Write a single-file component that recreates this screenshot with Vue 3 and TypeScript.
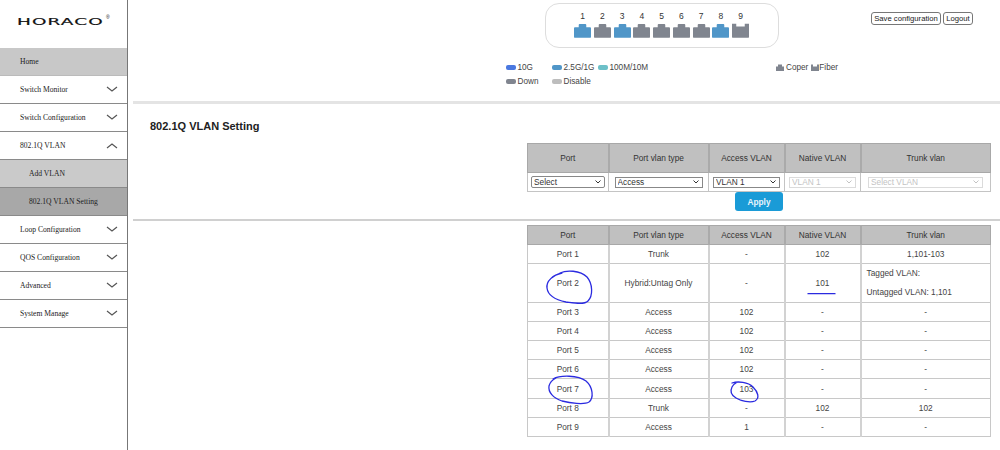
<script setup lang="ts">
interface MenuItem { label: string; chevron?: 'up' | 'down'; kind?: string }
const menu: MenuItem[] = [
  { label: 'Home', kind: 'home' },
  { label: 'Switch Monitor', chevron: 'down' },
  { label: 'Switch Configuration', chevron: 'down' },
  { label: '802.1Q VLAN', chevron: 'up' },
  { label: 'Add VLAN', kind: 'sub' },
  { label: '802.1Q VLAN Setting', kind: 'sub active' },
  { label: 'Loop Configuration', chevron: 'down' },
  { label: 'QOS Configuration', chevron: 'down' },
  { label: 'Advanced', chevron: 'down' },
  { label: 'System Manage', chevron: 'down' },
]
const ports = [
  { n: 1, up: true }, { n: 2, up: false }, { n: 3, up: true }, { n: 4, up: false }, { n: 5, up: false },
  { n: 6, up: false }, { n: 7, up: false }, { n: 8, up: true },
]
const heads = ['Port', 'Port vlan type', 'Access VLAN', 'Native VLAN', 'Trunk vlan']
const rows = [
  ['Port 1', 'Trunk', '-', '102', '1,101-103'],
  ['Port 2', 'Hybrid:Untag Only', '-', '101', ''],
  ['Port 3', 'Access', '102', '-', '-'],
  ['Port 4', 'Access', '102', '-', '-'],
  ['Port 5', 'Access', '102', '-', '-'],
  ['Port 6', 'Access', '102', '-', '-'],
  ['Port 7', 'Access', '103', '-', '-'],
  ['Port 8', 'Trunk', '-', '102', '102'],
  ['Port 9', 'Access', '1', '-', '-'],
]
const selects = [
  { cls: 's-port', val: 'Select', off: false },
  { cls: 's-type', val: 'Access', off: false },
  { cls: 's-acc', val: 'VLAN 1', off: false },
  { cls: 's-nat', val: 'VLAN 1', off: true },
  { cls: 's-trunk', val: 'Select VLAN', off: true },
]
</script>

<template>
  <div class="page">
    <aside class="side">
      <div class="logo"><span class="logo-text">HORACO</span><sup class="reg">®</sup></div>
      <nav>
        <div v-for="m in menu" :key="m.label" class="item" :class="m.kind">
          <span>{{ m.label }}</span>
          <svg v-if="m.chevron" class="chev" width="12" height="7" viewBox="0 0 12 7">
            <path :d="m.chevron === 'down' ? 'M1 1l5 4 5-4' : 'M1 6l5-4 5 4'" fill="none" stroke="#555" stroke-width="1.2" />
          </svg>
        </div>
      </nav>
    </aside>

    <main class="main">
      <header class="top">
        <div class="panel-wrap">
          <div class="panel">
            <div v-for="p in ports" :key="p.n" class="port">
              <span>{{ p.n }}</span>
              <svg width="17" height="15" viewBox="0 0 18 16" preserveAspectRatio="none">
                <path d="M0 15V5.500q0-1 1-1h4V2q0-1 1-1h6q1 0 1 1v2.500h4q1 0 1 1V15q0 .6-.6.6H.6Q0 15.600 0 15z" :fill="p.up ? '#5096c8' : '#80858f'" />
              </svg>
            </div>
            <div class="port">
              <span>9</span>
              <svg width="17" height="15" viewBox="0 0 18 16" preserveAspectRatio="none">
                <path d="M0 .8h4.500v3h9v-3H18V15q0 .6-.6.6H.6Q0 15.600 0 15z" fill="#80858f" />
              </svg>
            </div>
          </div>
          <div class="legend">
            <div class="leg-col">
              <div class="leg-row">
                <span class="leg l1"><i class="dot d-10g"></i>10G</span>
                <span class="leg l2"><i class="dot d-25g"></i>2.5G/1G</span>
                <span class="leg"><i class="dot d-100m"></i>100M/10M</span>
              </div>
              <div class="leg-row">
                <span class="leg l1"><i class="dot d-down"></i>Down</span>
                <span class="leg l2"><i class="dot d-dis"></i>Disable</span>
              </div>
            </div>
            <div class="leg-media">
              <span class="leg"><svg width="8" height="7" viewBox="0 0 8 7"><path d="M0 7V2.500h2V.500h4v2h2V7z" fill="#80858f" /></svg>Coper</span>
              <span class="leg tight"><svg width="8" height="7" viewBox="0 0 8 7"><path d="M0 .500h2v2h4v-2h2V7H0z" fill="#80858f" /></svg>Fiber</span>
            </div>
          </div>
        </div>
        <div class="actions">
          <button class="btn b-save" type="button">Save configuration</button>
          <button class="btn b-out" type="button">Logout</button>
        </div>
      </header>

      <div class="rule thick"></div>
      <h1 class="title">802.1Q VLAN Setting</h1>

      <div class="form-block">
        <table class="tbl form">
          <colgroup>
            <col class="c1" /><col class="c2" /><col class="c3" /><col class="c4" /><col class="c5" />
          </colgroup>
          <thead><tr><th v-for="h in heads" :key="h">{{ h }}</th></tr></thead>
          <tbody>
            <tr>
              <td v-for="s in selects" :key="s.cls">
                <select class="sel" :class="s.cls" :disabled="s.off"><option>{{ s.val }}</option></select>
              </td>
            </tr>
          </tbody>
        </table>
        <button class="apply" type="button">Apply</button>
      </div>

      <div class="rule thin"></div>

      <table class="tbl list">
        <colgroup>
          <col class="c1" /><col class="c2" /><col class="c3" /><col class="c4" /><col class="c5" />
        </colgroup>
        <thead><tr><th v-for="h in heads" :key="h">{{ h }}</th></tr></thead>
        <tbody>
          <tr v-for="r in rows" :key="r[0]" :class="{ tall: r[0] === 'Port 2' }">
            <td v-for="(c, i) in r.slice(0, 4)" :key="i">{{ c }}</td>
            <td v-if="r[0] === 'Port 2'" class="tags">
              <div>Tagged VLAN:</div>
              <div>Untagged VLAN: 1,101</div>
            </td>
            <td v-else>{{ r[4] }}</td>
          </tr>
        </tbody>
      </table>
    </main>

    <svg class="ink" width="1000" height="450" viewBox="0 0 1000 450">
      <g fill="none" stroke="#2b2be0" stroke-width="1.3" stroke-linecap="round">
        <path d="M560 273C566 270 580 270 587 277C593 284 593 296 588 301C584 305 574 303 566 302C556 300 548 296 547 288C546 281 553 275 562 273" />
        <path d="M808 293.700H835" />
        <path d="M553 379C560 375 578 375 586 381C593 387 594 398 589 402C584 405 570 403 562 401C553 398 548 392 549 386C550 382 552 380 556 378" />
        <path d="M732 383C738 381 748 382 753 387C758 392 760 398 755 401C750 403 741 401 736 398C731 395 730 391 732 387C733 385 734 384 736 383" />
      </g>
    </svg>
  </div>
</template>

<style>
html, body { margin: 0; background: #fff; }
</style>

<style scoped>
.page {
  position: relative;
  display: flex;
  width: 1000px;
  height: 450px;
  overflow: hidden;
  background: #fff;
  font-family: "Liberation Sans", Arial, sans-serif;
  color: #333;
}
.side {
  flex: none;
  box-sizing: border-box;
  width: 128px;
  height: 450px;
  border-right: 1px solid #777;
}
.logo {
  box-sizing: border-box;
  position: relative;
  height: 48px;
  padding: 11px 0 0 17px;
  white-space: nowrap;
  color: #111;
}
.logo-text {
  display: inline-block;
  font-family: "DejaVu Sans", sans-serif;
  font-size: 8px;
  line-height: 16px;
  font-weight: 400;
  letter-spacing: 0.500px;
  -webkit-text-stroke: 0.150px #111;
  transform: scaleX(2.3);
  transform-origin: left center;
}
.reg {
  position: absolute;
  left: 106px;
  top: 15px;
  font-size: 5px;
  line-height: 5px;
}
.item {
  box-sizing: border-box;
  display: flex;
  align-items: center;
  justify-content: space-between;
  height: 28px;
  padding: 0 9px 0 20px;
  border-bottom: 1px solid #8a8a8a;
  font-family: "Liberation Serif", "Times New Roman", serif;
  font-size: 7.600px;
  color: #222;
}
.home { background: #c8c8c8; border-bottom-color: #bbb; }
.sub { background: #cacaca; padding-left: 29px; }
.sub.active { background: #a8a8a8; }
.chev { flex: none; }
.main {
  flex: 1;
  min-width: 0;
  padding-left: 5px;
}
.top {
  display: flex;
  height: 101px;
}
.panel-wrap { margin-left: 373px; width: 340px; padding-top: 3px; }
.panel {
  box-sizing: border-box;
  display: flex;
  justify-content: center;
  gap: 2.750px;
  width: 234px;
  height: 45px;
  margin-left: 39px;
  padding: 8px 1px 0 0;
  border: 1px solid #ddd;
  border-radius: 14px;
}
.port {
  display: flex;
  flex-direction: column;
  align-items: center;
  width: 17px;
  font-size: 8.500px;
  line-height: 9px;
  color: #333;
}
.port svg { margin-top: 2px; }
.legend {
  display: flex;
  justify-content: space-between;
  margin-top: 12px;
  font-size: 8.200px;
  color: #444;
}
.leg-row { display: flex; height: 14px; align-items: center; }
.leg { display: inline-flex; align-items: center; gap: 2px; white-space: nowrap; }
.tight { gap: 0; }
.l1 { width: 46px; }
.l2 { width: 46px; }
.dot {
  display: inline-block;
  width: 9.500px;
  height: 5px;
  border-radius: 2px;
}
.d-10g { background: #4a78e0; }
.d-25g { background: #5096c8; }
.d-100m { background: #6cc0c8; }
.d-down { background: #80858f; }
.d-dis { background: #bdbdbd; }
.leg-media {
  display: flex;
  gap: 3px;
  height: 14px;
  align-items: center;
  margin-right: 8px;
}
.actions {
  display: flex;
  gap: 2px;
  align-items: flex-start;
  margin-left: 25px;
  padding-top: 12px;
}
.btn {
  box-sizing: border-box;
  height: 13px;
  padding: 0;
  border: 1px solid #777;
  border-radius: 3px;
  background: #fff;
  font-family: inherit;
  font-size: 7.700px;
  line-height: 11px;
  color: #222;
  white-space: nowrap;
}
.b-save { width: 70px; }
.b-out { width: 30px; }
.rule { background: #e4e4e4; }
.thick { height: 3px; }
.thin { height: 1.500px; background: #d0d0d0; }
.title {
  margin: 0;
  padding: 15px 0 0 17px;
  height: 24px;
  font-size: 11px;
  line-height: 14px;
  font-weight: 700;
  color: #222;
}
.form-block {
  box-sizing: border-box;
  display: flex;
  flex-direction: column;
  align-items: flex-start;
  height: 76px;
  padding-left: 394px;
}
.tbl {
  border-collapse: collapse;
  table-layout: fixed;
  width: 463px;
  font-size: 8.300px;
  color: #444;
  text-align: center;
}
.c1 { width: 81px; }
.c2 { width: 100px; }
.c3 { width: 76px; }
.c4 { width: 76px; }
.c5 { width: 130px; }
.tbl th {
  background: #c0c0c0;
  font-weight: 400;
  color: #333;
  border: 1px solid #a8a8a8;
  padding: 0;
}
.tbl th + th { border-left: 2px solid #aaa; }
.form th { height: 28px; }
.form td { height: 18px; padding: 0; border: 1px solid #c4c4c4; }
.sel {
  box-sizing: border-box;
  display: block;
  appearance: none;
  height: 12px;
  margin: 0 auto;
  padding: 0 0 0 2px;
  border: 1px solid #888;
  background: #fff url("data:image/svg+xml,%3Csvg xmlns='http://www.w3.org/2000/svg' width='6' height='4'%3E%3Cpath d='M.5.5l2.500 2.500 2.500-2.500' fill='none' stroke='%23333' stroke-width='1'/%3E%3C/svg%3E") no-repeat right 3px center;
  font-family: inherit;
  font-size: 8.300px;
  line-height: 9px;
  color: #333;
}
.s-port { width: 74px; border-radius: 2px; }
.s-type { width: 88px; height: 11px; }
.s-acc { width: 67px; height: 11px; }
.s-nat, .s-trunk {
  height: 11px;
  border-color: #ccc;
  color: #aaa;
  background-image: url("data:image/svg+xml,%3Csvg xmlns='http://www.w3.org/2000/svg' width='6' height='4'%3E%3Cpath d='M.5.5l2.500 2.500 2.500-2.500' fill='none' stroke='%23aaa' stroke-width='1'/%3E%3C/svg%3E");
}
.s-nat { width: 67px; }
.s-trunk { width: 115px; }
.apply {
  align-self: flex-start;
  width: 48px;
  height: 19px;
  margin: 0 0 0 208px;
  padding: 0;
  border: 0;
  border-radius: 3px;
  background: #1a9bd7;
  font-family: inherit;
  font-size: 8.300px;
  font-weight: 700;
  color: #e8f4fb;
}
.list { margin: 4px 0 0 394px; }
.list th { height: 18px; }
.list td { height: 18.200px; padding: 0; border: 1px solid #c8c8c8; }
.list td + td { border-left: 2px solid #d2d2d2; }
.tall td { height: 37px; }
.tags { text-align: left; padding-left: 5px !important; line-height: 19px; }
.ink {
  position: absolute;
  left: 0;
  top: 0;
  pointer-events: none;
}
</style>
